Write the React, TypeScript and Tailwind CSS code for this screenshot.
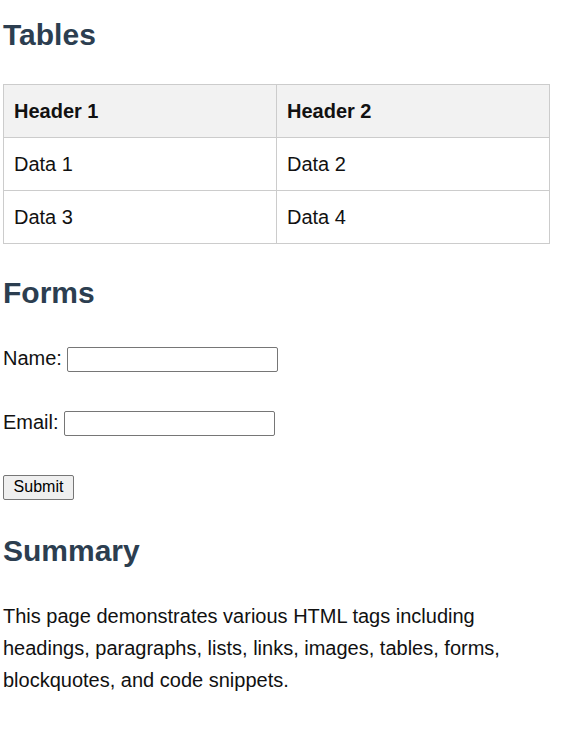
export default function App() {
  const rows = [
    ["Data 1", "Data 2"],
    ["Data 3", "Data 4"],
  ];

  return (
    <main className="px-[3px] pt-[11px] text-[20px] leading-[1.6] text-[#111] bg-white font-['Liberation_Sans',Arial,sans-serif]">
      {/* Tables */}
      <h2 className="text-[30px] leading-[48px] font-bold text-[#2c3e50] mb-[25px]">Tables</h2>
      <table className="w-[547px] border-collapse table-fixed">
        <thead>
          <tr className="bg-[#f2f2f2]">
            <th className="border border-[#cccccc] px-[10px] py-[10px] text-left font-bold">Header 1</th>
            <th className="border border-[#cccccc] px-[10px] py-[10px] text-left font-bold">Header 2</th>
          </tr>
        </thead>
        <tbody>
          {rows.map((r) => (
            <tr key={r[0]}>
              {r.map((c) => (
                <td key={c} className="border border-[#cccccc] px-[10px] py-[10px]">
                  {c}
                </td>
              ))}
            </tr>
          ))}
        </tbody>
      </table>

      {/* Forms */}
      <h2 className="text-[30px] leading-[48px] font-bold text-[#2c3e50] mt-[25px] mb-[25px]">Forms</h2>
      <form onSubmit={(e) => e.preventDefault()}>
        <div className="h-[32px] flex items-center">
          <label htmlFor="name">Name:</label>
          <input
            id="name"
            type="text"
            className="ml-[5px] mt-[2px] w-[211px] h-[25px] border border-[#767676] rounded-[2px] bg-white"
          />
        </div>
        <div className="h-[32px]" />
        <div className="h-[32px] flex items-center">
          <label htmlFor="email">Email:</label>
          <input
            id="email"
            type="email"
            className="ml-[5px] mt-[2px] w-[211px] h-[25px] border border-[#767676] rounded-[2px] bg-white"
          />
        </div>
        <div className="h-[32px]" />
        <div className="h-[32px] flex items-center">
          <button
            type="submit"
            className="mt-[2px] w-[71px] h-[25px] text-[16px] leading-none border border-[#767676] rounded-[2px] bg-[#efefef] text-black"
          >
            Submit
          </button>
        </div>
      </form>

      {/* Summary */}
      <h2 className="text-[30px] leading-[48px] font-bold text-[#2c3e50] mt-[25px] mb-[25px]">Summary</h2>
      <p className="w-[547px] pb-[35px]">
        This page demonstrates various HTML tags including headings, paragraphs, lists, links, images, tables, forms,
        blockquotes, and code snippets.
      </p>
    </main>
  );
}
